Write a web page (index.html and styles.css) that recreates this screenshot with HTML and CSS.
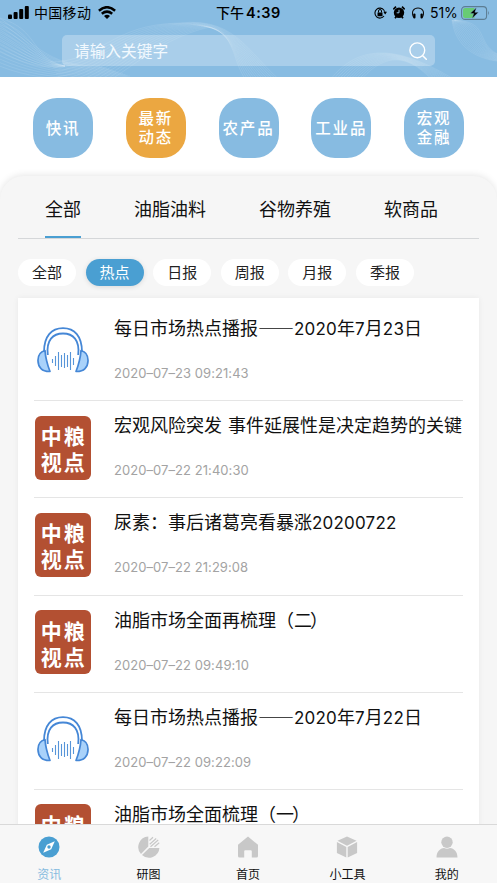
FILE: index.html
```html
<!DOCTYPE html>
<html lang="zh-CN">
<head>
<meta charset="utf-8">
<title>资讯</title>
<link rel="stylesheet" href="styles.css">
</head>
<body>
<svg class="defs" aria-hidden="true">
  <symbol id="headphones" viewBox="0 0 52 46">
    <path d="M7 25C7 9 14.500 1.200 26 1.200S45 9 45 25M10.800 28C9 13 16 6.500 26 6.500s17 6.500 15.200 21.500" fill="none" stroke="#4587d6" stroke-width="1.800"/>
    <path d="M8 23.500C2.500 25 .8 29 1 34c.2 6 3.800 10.800 12 10.500C10.500 38 8.500 31 8 23.500zM44 23.500c5.500 1.500 7.200 5.500 7 10.500-.2 6-3.800 10.800-12 10.500C41.500 38 43.500 31 44 23.500z" fill="#a9d2fa" stroke="#4587d6" stroke-width="1.700" stroke-linejoin="round"/>
    <path d="M15.500 32v4M18.500 29v10M21.500 25v18M24.500 28v12M27.500 26v15M30.500 28v12M33.500 25v18M36.500 31v7" fill="none" stroke="#5795d9" stroke-width="1.100"/>
  </symbol>
</svg>

<header class="header">
  <svg class="waves" viewBox="0 0 497 77" aria-hidden="true"></svg>
  <div class="status">
    <svg class="signal" viewBox="0 0 21 13"><rect y="8.500" width="4" height="4.500" rx="1"/><rect x="5.600" y="6" width="4" height="7" rx="1"/><rect x="11.200" y="3" width="4" height="10" rx="1"/><rect x="16.800" width="4" height="13" rx="1"/></svg>
    <span class="carrier">中国移动</span>
    <svg class="wifi" viewBox="0 0 18 13"><path d="M.9 4.700Q9-2.300 17.100 4.700M3.800 7.800q5.200-4.300 10.400 0" fill="none" stroke="#000" stroke-width="2.500"/><path d="M6 10q3-2.500 6 0l-3 3z"/></svg>
    <span class="clock">下午<b>4:39</b></span>
    <svg class="lock" viewBox="0 0 14 12"><path d="M11 9A5 5 0 1 1 11 3.200" fill="none" stroke="#000" stroke-width="1.100"/><path d="M10.300 4.800H14L12.200 7.500zM4.500 5.500h5v3.700h-5z"/><path d="M5.500 5.500V4a1.500 1.500 0 0 1 3 0v1.500" fill="none" stroke="#000"/><path d="M11 3.200q1 1.300.9 3" fill="none" stroke="#000"/></svg>
    <svg class="alarm" viewBox="0 0 12 13"><circle cx="6" cy="6.700" r="5.200"/><path d="M.3 3.300 3 .6M11.700 3.300 9 .6M2 12.300l1.500-2M10 12.300l-1.500-2" stroke="#000" stroke-width="1.700"/><path d="M6 3.800v3H3.700" fill="none" stroke="#8abfe3" stroke-width="1"/></svg>
    <svg class="phones" viewBox="0 0 12 12"><path d="M1.800 10.500C-1.500 4.500 2 1 6 1s7.500 3.500 4.200 9.500" fill="none" stroke="#111" stroke-width="1.100"/><rect x="1.300" y="6.600" width="2.200" height="4.800" rx="1"/><rect x="8.500" y="6.600" width="2.200" height="4.800" rx="1"/></svg>
    <span class="percent">51%</span>
    <svg class="battery" viewBox="0 0 29 14"><rect x=".6" y=".6" width="25" height="12.800" rx="3.500" fill="none" stroke="#5c7d93" stroke-width="1.100"/><path d="M4 2h9.500v10H4a2 2 0 0 1-2-2V4a2 2 0 0 1 2-2z" fill="#68cb74"/><path d="M27.200 4.800q1.700 2.200 0 4.400z" fill="#5c7d93"/><path d="M15.500 1.500 9 7.600h3.700l-1.700 5 6.500-6.300h-3.600z" stroke="#8abfe3" stroke-width=".4"/></svg>
  </div>
  <div class="search">
    <span>请输入关键字</span>
    <svg viewBox="0 0 18 18"><path d="m14 14 3.300 3.300" stroke="#fff" stroke-width="1.500" stroke-linecap="round"/><circle cx="8.300" cy="8.300" r="7.400" fill="none" stroke="#fff" stroke-width="1.400"/></svg>
  </div>
</header>

<nav class="channels">
  <a class="channel">快讯</a>
  <a class="channel active">最新<br>动态</a>
  <a class="channel">农产品</a>
  <a class="channel">工业品</a>
  <a class="channel">宏观<br>金融</a>
</nav>

<main class="panel">
  <div class="tabs">
    <a class="tab active">全部</a><a class="tab">油脂油料</a><a class="tab">谷物养殖</a><a class="tab">软商品</a>
  </div>
  <div class="filters">
    <a class="filter">全部</a><a class="filter active">热点</a><a class="filter">日报</a><a class="filter">周报</a><a class="filter">月报</a><a class="filter">季报</a>
  </div>
  <div class="list">
    <article class="item">
      <div class="thumb"><svg class="audio"><use href="#headphones"/></svg></div>
      <div class="info"><h2>每日市场热点播报<span class="dash">——</span><span class="num">2020</span>年<span class="num">7</span>月<span class="num">23</span>日</h2><time>2020–07–23 09:21:43</time></div>
    </article>
    <article class="item">
      <div class="thumb stamp">中粮<br>视点</div>
      <div class="info"><h2>宏观风险突发<span class="gap"> </span>事件延展性是决定趋势的关键</h2><time>2020–07–22 21:40:30</time></div>
    </article>
    <article class="item">
      <div class="thumb stamp">中粮<br>视点</div>
      <div class="info"><h2>尿素：事后诸葛亮看暴涨<span class="num">20200722</span></h2><time>2020–07–22 21:29:08</time></div>
    </article>
    <article class="item">
      <div class="thumb stamp">中粮<br>视点</div>
      <div class="info"><h2>油脂市场全面再梳理（二<span class="close">）</span></h2><time>2020–07–22 09:49:10</time></div>
    </article>
    <article class="item">
      <div class="thumb"><svg class="audio"><use href="#headphones"/></svg></div>
      <div class="info"><h2>每日市场热点播报<span class="dash">——</span><span class="num">2020</span>年<span class="num">7</span>月<span class="num">22</span>日</h2><time>2020–07–22 09:22:09</time></div>
    </article>
    <article class="item">
      <div class="thumb stamp">中粮<br>视点</div>
      <div class="info"><h2>油脂市场全面梳理（一<span class="close">）</span></h2></div>
    </article>
  </div>
</main>

<footer class="tabbar">
  <a class="nav active"><svg viewBox="0 0 22 22"><circle cx="11" cy="11" r="10.500" fill="#4a9fd2"/><path d="m16.800 5.200-3.600 8-8 3.600 3.600-8z" fill="#fff"/><circle cx="11" cy="11" r="1.700" fill="#4a9fd2"/></svg><span>资讯</span></a>
  <a class="nav"><svg viewBox="0 0 22 22"><path d="M10.300.6v10L3 18A10.400 10.400 0 0 1 10.300.6zM11.200 12h10.200A10.400 10.400 0 0 1 4 18.900z" fill="#c8c8c8"/><path d="M11.500 4.500 15 1.200M11.700 8.200l6.500-5.700M12.500 10.800l7.700-6.800M16.500 10.800l4.700-4" fill="none" stroke="#c8c8c8" stroke-width="1.200"/></svg><span>研图</span></a>
  <a class="nav"><svg viewBox="0 0 22 22"><path d="M11 .5 21 8.800V20a1.500 1.500 0 0 1-1.500 1.500h-4.700v-6.300a1 1 0 0 0-1-1H8.200a1 1 0 0 0-1 1v6.300H2.500A1.500 1.500 0 0 1 1 20V8.800z" fill="#c8c8c8"/></svg><span>首页</span></a>
  <a class="nav"><svg viewBox="0 0 22 22"><path d="m11 .4 9.500 4.300L11 9.700 1.500 4.700zM.9 6l9.400 5v10.500L.9 17zM21.100 6l-9.400 5v10.500l9.400-4.500z" fill="#c8c8c8"/></svg><span>小工具</span></a>
  <a class="nav"><svg viewBox="0 0 22 22"><circle cx="11" cy="6.200" r="5.700" fill="#c8c8c8"/><path d="M.5 21.500c0-6 3.500-9 7.500-9.500q3 1.500 6 0c4 .5 7.500 3.500 7.500 9.500z" fill="#c8c8c8"/></svg><span>我的</span></a>
</footer>
<script src="app.js"></script>
</body>
</html>
```
FILE: styles.css
```css
* { box-sizing: border-box; }

body {
  margin: 0;
  height: 883px;
  overflow: hidden;
  display: flex;
  flex-direction: column;
  background: #fff;
  color: #111;
  font-family: "Noto Sans CJK SC", sans-serif;
}

svg { display: block; flex: none; }
.defs { position: absolute; width: 0; height: 0; }

.header {
  position: relative;
  flex: none;
  height: 77px;
  background: #88bce2;
}

.waves {
  position: absolute;
  inset: 0;
  width: 497px;
  height: 77px;
  fill: none;
  stroke: #fff;
  stroke-width: .6;
  stroke-opacity: .17;
}

.status {
  position: relative;
  display: flex;
  align-items: center;
  height: 25px;
  padding-left: 8px;
  font-size: 14px;
  line-height: 25px;
  color: #000;
}
.signal { width: 21px; height: 13px; }
.carrier { width: 58px; margin-left: 5px; letter-spacing: .3px; }
.wifi { width: 18px; height: 13px; margin-left: 6px; }
.clock { width: 70px; margin-left: 100px; font-weight: 500; white-space: nowrap; }
.clock b { margin-left: 2px; font: 600 14.500px/25px Inter, sans-serif; letter-spacing: .5px; }
.lock { width: 14px; height: 12px; margin-left: 87px; }
.alarm { width: 12px; height: 13px; margin-left: 6px; }
.phones { width: 12px; height: 12px; margin-left: 7px; }
.percent { width: 27px; margin-left: 6px; font: 14px/25px Inter, sans-serif; letter-spacing: -.1px; }
.battery { width: 29px; height: 14px; margin-left: 4px; }

.search {
  position: relative;
  display: flex;
  align-items: center;
  justify-content: space-between;
  width: 373px;
  height: 31px;
  margin: 10px 0 0 62px;
  padding: 0 8px 0 12px;
  border-radius: 5px;
  background: rgba(255, 255, 255, .28);
  color: #f2f9fe;
  font-size: 15.700px;
  line-height: 30px;
}
.search svg { width: 18px; height: 18px; }

.channels {
  flex: none;
  display: flex;
  justify-content: space-between;
  height: 99px;
  padding: 21px 33px 0;
}
.channel {
  display: flex;
  align-items: center;
  justify-content: center;
  width: 60px;
  height: 60px;
  padding-bottom: 2px;
  border-radius: 24px;
  background: #87bbe1;
  color: #fff;
  font-size: 15.500px;
  font-weight: 500;
  line-height: 19px;
  letter-spacing: 1.800px;
  white-space: nowrap;
}
.channel.active { background: #eba741; }

.panel {
  flex: 1;
  min-height: 0;
  overflow: hidden;
  padding: 0 18px;
  border-radius: 24px 24px 0 0;
  background: #f6f6f6;
  box-shadow: 0 -1px 7px rgba(0, 0, 0, .1);
}

.tabs {
  display: flex;
  gap: 53px;
  height: 63px;
  padding: 0 27px;
  border-bottom: 1px solid #d5d7d9;
}
.tab {
  height: 62px;
  font-size: 18px;
  line-height: 64px;
}
.tab.active { border-bottom: 2px solid #4a9fd2; }

.filters {
  display: flex;
  gap: 9.600px;
  height: 59px;
  padding-top: 20px;
}
.filter {
  width: 58px;
  height: 27px;
  border-radius: 14px;
  background: #fff;
  color: #222;
  font-size: 15px;
  line-height: 25px;
  text-align: center;
}
.filter.active {
  background: #4a9fd2;
  color: #fff;
  box-shadow: 0 1px 5px rgba(0, 0, 0, .12);
}

.list {
  width: 461px;
  height: 600px;
  padding: 6px 16px 0;
  background: #fff;
  box-shadow: 0 0 6px rgba(0, 0, 0, .06);
}
.item {
  display: flex;
  height: 97.200px;
  padding-top: 14.500px;
  border-bottom: 1px solid #e5e5e5;
}
.thumb {
  flex: none;
  width: 56px;
  height: 64px;
  margin-left: 1px;
}
.audio { width: 52px; height: 46px; margin: 8.500px 0 0 2px; }
.stamp {
  padding: 6.500px 0 0 1.500px;
  border-radius: 6px;
  background: #b35032;
  color: #fff;
  font-size: 21px;
  font-weight: 700;
  line-height: 26px;
  letter-spacing: 2px;
  text-align: center;
}
.info { margin-left: 23px; white-space: nowrap; }
h2 {
  height: 34px;
  margin: -6.500px 0 0;
  font-size: 18px;
  font-weight: 400;
  line-height: 30px;
}
.dash { font-weight: 500; }
.num { font-family: Inter, sans-serif; font-size: 17px; letter-spacing: .2px; }
.gap { display: inline-block; width: 6px; }
.close { margin-left: -2px; }
time {
  display: block;
  margin-top: 17px;
  color: #a3a3a3;
  font: 13px/20px Inter, sans-serif;
  letter-spacing: .06px;
}

.tabbar {
  position: relative;
  flex: none;
  display: flex;
  height: 59px;
  border-top: 1px solid #d9d9d9;
  background: #f7f7f7;
}
.nav {
  flex: 1;
  display: flex;
  flex-direction: column;
  align-items: center;
  padding: 11px 1px 0 0;
  font-size: 12px;
  line-height: 18px;
}
.nav svg { width: 22px; height: 22px; }
.nav span { margin-top: 7px; }
.nav.active { color: #86bbdf; }
```
FILE: app.js
```js
// Each bundle blends from one cubic path to another; numbers are x,y pairs.
const bundles = [
  [[-20, 8, 25, 25, 35, 68, 100, 66], [-30, 50, 10, 78, 60, 84, 130, 76], 14],
  [[0, 18, 40, 30, 30, 58, 65, 66], [-20, 40, 15, 60, 35, 70, 65, 66], 10],
  [[50, 62, 100, 62, 110, 24, 180, 23], [70, 100, 120, 84, 150, 40, 210, 27], 14],
  [[180, 23, 240, 16, 250, 60, 290, 88], [210, 27, 240, 36, 230, 70, 255, 90], 14],
  [[330, 80, 360, 42, 400, 46, 455, 80], [350, 95, 380, 48, 410, 50, 440, 90], 12],
  [[452, 20, 455, 45, 475, 62, 510, 62], [455, 20, 495, 22, 470, 50, 510, 58], 14]
];
const svg = document.querySelector(".waves");
for (const [from, to, count] of bundles) {
  for (let i = 0; i < count; i++) {
    const p = from.map((v, k) => v + (to[k] - v) * i / (count - 1));
    const path = document.createElementNS("http://www.w3.org/2000/svg", "path");
    path.setAttribute("d", `M${p[0]} ${p[1]}C${p.slice(2).join(" ")}`);
    svg.append(path);
  }
}
```
